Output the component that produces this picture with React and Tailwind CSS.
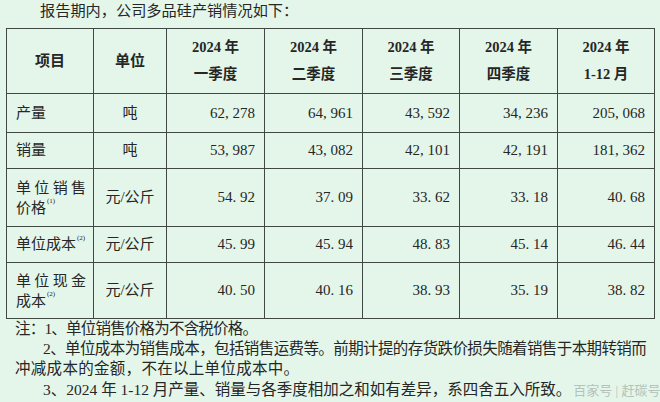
import React from "react";

const font = { fontFamily: '"Liberation Serif", "Noto Sans CJK SC", serif' };

const cols = [87, 73, 98, 98, 97, 98, 97];

function Sup({ n }) {
  return <sup className="text-[7px] align-super ml-[1px]">({n})</sup>;
}

function Num({ v }) {
  return <td className="border border-[#3f4842] text-right pr-[9px] text-[15px]">{v}</td>;
}

function Unit({ v }) {
  return <td className="border border-[#3f4842] text-center text-[15px]">{v}</td>;
}

function Label({ children }) {
  return <td className="border border-[#3f4842] pl-[9px] pr-[6px] text-[15px] text-left">{children}</td>;
}

function Two({ a, b, n }) {
  return (
    <div className="leading-[20px]">
      <div className="flex justify-between w-[70px]">
        {a.split("").map((c, i) => (
          <span key={i}>{c}</span>
        ))}
      </div>
      <div>
        {b}
        <Sup n={n} />
      </div>
    </div>
  );
}

export default function App() {
  const head = ["2024 年|一季度", "2024 年|二季度", "2024 年|三季度", "2024 年|四季度", "2024 年|1-12 月"];
  return (
    <div className="w-[660px] h-[402px] bg-[#e4f6ea] text-[#262626] overflow-hidden relative" style={font}>
      <div className="h-[28px] pl-[40px] pt-[1px] text-[15.2px] leading-[20px] text-[#262626] whitespace-nowrap">
        报告期内，公司多品硅产销情况如下：
      </div>
      <table className="ml-[6px] border-collapse table-fixed w-[648px]">
        <colgroup>
          {cols.map((w, i) => (
            <col key={i} style={{ width: w }} />
          ))}
        </colgroup>
        <tbody>
          <tr className="h-[65px]">
            <td className="border border-[#3f4842] text-center font-bold text-[15px]">项目</td>
            <td className="border border-[#3f4842] text-center font-bold text-[15px]">单位</td>
            {head.map((h, i) => {
              const [a, b] = h.split("|");
              return (
                <td key={i} className="border border-[#3f4842] text-center font-bold text-[14.5px] leading-[27px]">
                  <div>{a}</div>
                  <div>{b}</div>
                </td>
              );
            })}
          </tr>
          <tr className="h-[39px]">
            <Label>产量</Label>
            <Unit v="吨" />
            <Num v="62, 278" />
            <Num v="64, 961" />
            <Num v="43, 592" />
            <Num v="34, 236" />
            <Num v="205, 068" />
          </tr>
          <tr className="h-[36px]">
            <Label>销量</Label>
            <Unit v="吨" />
            <Num v="53, 987" />
            <Num v="43, 082" />
            <Num v="42, 101" />
            <Num v="42, 191" />
            <Num v="181, 362" />
          </tr>
          <tr className="h-[58px]">
            <Label>
              <Two a="单位销售" b="价格" n={1} />
            </Label>
            <Unit v="元/公斤" />
            <Num v="54. 92" />
            <Num v="37. 09" />
            <Num v="33. 62" />
            <Num v="33. 18" />
            <Num v="40. 68" />
          </tr>
          <tr className="h-[36px]">
            <Label>
              单位成本
              <Sup n={2} />
            </Label>
            <Unit v="元/公斤" />
            <Num v="45. 99" />
            <Num v="45. 94" />
            <Num v="48. 83" />
            <Num v="45. 14" />
            <Num v="46. 44" />
          </tr>
          <tr className="h-[56px]">
            <Label>
              <Two a="单位现金" b="成本" n={2} />
            </Label>
            <Unit v="元/公斤" />
            <Num v="40. 50" />
            <Num v="40. 16" />
            <Num v="38. 93" />
            <Num v="35. 19" />
            <Num v="38. 82" />
          </tr>
        </tbody>
      </table>
      <div className="text-[15.5px] leading-[20px] whitespace-nowrap">
        <div className="pl-[15px] tracking-[-0.8px]">注：1、单位销售价格为不含税价格。</div>
        <div className="pl-[43px] tracking-[-0.6px]">
          2、单位成本为销售成本，包括销售运费等。前期计提的存货跌价损失随着销售于本期转销而
        </div>
        <div className="pl-[15px] tracking-[0.3px]">冲减成本的金额，不在以上单位成本中。</div>
        <div className="pl-[43px] pt-[1px]">
          3、2024 年 1-12 月产量、销量与各季度相加之和如有差异，系四舍五入所致。
          <span className="text-[#b4c2ba] text-[13px] ml-[2px] tracking-[0px]">百家号 | 赶碳号</span>
        </div>
      </div>
    </div>
  );
}
